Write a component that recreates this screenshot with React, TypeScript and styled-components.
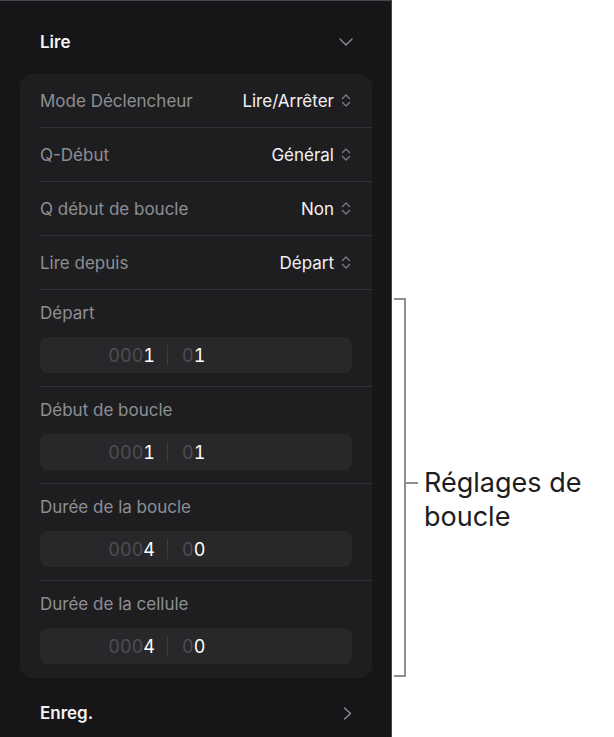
import styled, { createGlobalStyle } from 'styled-components';

const GlobalStyle = createGlobalStyle`
  html, body {
    margin: 0;
    padding: 0;
    background: #ffffff;
  }
  body {
    font-family: Inter, "Noto Sans", "Liberation Sans", sans-serif;
    -webkit-font-smoothing: antialiased;
  }
`;

type Choice = { label: string; value: string };
type Position = { label: string; major: string; minor: string };

const choices: Choice[] = [
  { label: 'Mode Déclencheur', value: 'Lire/Arrêter' },
  { label: 'Q-Début', value: 'Général' },
  { label: 'Q début de boucle', value: 'Non' },
  { label: 'Lire depuis', value: 'Départ' },
];

const positions: Position[] = [
  { label: 'Départ', major: '0001', minor: '01' },
  { label: 'Début de boucle', major: '0001', minor: '01' },
  { label: 'Durée de la boucle', major: '0004', minor: '00' },
  { label: 'Durée de la cellule', major: '0004', minor: '00' },
];

function ChevronDown() {
  return (
    <svg width="14" height="8" viewBox="0 0 14 8" fill="none">
      <path d="M1 1l6 6 6-6" stroke="#8d8d92" strokeWidth="1.4" strokeLinecap="round" strokeLinejoin="round" />
    </svg>
  );
}

function ChevronRight() {
  return (
    <svg width="9" height="13" viewBox="0 0 9 13" fill="none">
      <path d="M1.5 1l6 5.5-6 5.5" stroke="#8d8d92" strokeWidth="1.4" strokeLinecap="round" strokeLinejoin="round" />
    </svg>
  );
}

function UpDown() {
  return (
    <svg width="10" height="15" viewBox="0 0 10 15" fill="none">
      <path d="M1.5 5.5L5 2l3.5 3.5M1.5 9.5L5 13l3.5-3.5" stroke="#7c7c81" strokeWidth="1.3" strokeLinecap="round" strokeLinejoin="round" />
    </svg>
  );
}

// leading digits are shown dimmed, the last one bright
function Digits({ value }: { value: string }) {
  return (
    <>
      <Dim>{value.slice(0, -1)}</Dim>
      <Bright>{value.slice(-1)}</Bright>
    </>
  );
}

export default function App() {
  return (
    <>
      <GlobalStyle />
      <Page>
        <Panel>
          <SectionHeader>
            <HeaderTitle>Lire</HeaderTitle>
            <ChevronDown />
          </SectionHeader>
          <Card>
            {choices.map((c) => (
              <ChoiceRow key={c.label}>
                <RowLabel>{c.label}</RowLabel>
                <RowValue>
                  {c.value}
                  <UpDown />
                </RowValue>
              </ChoiceRow>
            ))}
            {positions.map((p, i) => (
              <PositionBlock key={p.label} $last={i === positions.length - 1}>
                <RowLabel>{p.label}</RowLabel>
                <PositionField>
                  <MajorPart>
                    <Digits value={p.major} />
                  </MajorPart>
                  <FieldDivider />
                  <MinorPart>
                    <Digits value={p.minor} />
                  </MinorPart>
                </PositionField>
              </PositionBlock>
            ))}
          </Card>
          <FooterRow>
            <HeaderTitle>Enreg.</HeaderTitle>
            <ChevronRight />
          </FooterRow>
        </Panel>
        <Annotation>
          <Bracket />
          <Callout>
            <Tick />
            <CalloutText>
              Réglages de
              <br />
              boucle
            </CalloutText>
          </Callout>
        </Annotation>
      </Page>
    </>
  );
}

const Page = styled.div`
  display: flex;
  width: 614px;
  height: 737px;
  overflow: hidden;
  background: #ffffff;
`;

const Panel = styled.div`
  box-sizing: border-box;
  width: 392px;
  height: 737px;
  flex-shrink: 0;
  background: #161618;
  border-top: 1px solid #46464a;
  border-right: 1px solid #46464a;
  padding: 0 19px 0 20px;
  display: flex;
  flex-direction: column;
`;

const SectionHeader = styled.div`
  display: flex;
  align-items: center;
  justify-content: space-between;
  height: 73px;
  padding: 8px 19px 0 20px;
  box-sizing: border-box;
`;

const HeaderTitle = styled.div`
  color: #f4f4f5;
  font-size: 17px;
  font-weight: 600;
  line-height: 22px;
`;

const Card = styled.div`
  background: #1e1e21;
  border-radius: 12px;
  padding-left: 20px;
`;

const ChoiceRow = styled.div`
  display: flex;
  align-items: center;
  justify-content: space-between;
  height: 54px;
  box-sizing: border-box;
  padding-right: 21px;
  border-bottom: 1px solid #323236;
`;

const RowLabel = styled.div`
  color: #8e8e93;
  font-size: 17px;
  line-height: 22px;
`;

const RowValue = styled.div`
  display: flex;
  align-items: center;
  gap: 7px;
  color: #f2f2f3;
  font-size: 17px;
  line-height: 22px;
`;

const PositionBlock = styled.div<{ $last: boolean }>`
  display: flex;
  flex-direction: column;
  gap: 13px;
  padding: 12px 20px ${(p) => (p.$last ? '14px' : '13px')} 0;
  border-bottom: ${(p) => (p.$last ? 'none' : '1px solid #323236')};
`;

const PositionField = styled.div`
  display: flex;
  align-items: center;
  height: 36px;
  border-radius: 8px;
  background: #28282b;
  font-size: 18px;
  font-variant-numeric: tabular-nums;
`;

const MajorPart = styled.div`
  width: 115px;
  text-align: right;
`;

const MinorPart = styled.div`
  flex: 1;
`;

const FieldDivider = styled.div`
  width: 1px;
  height: 20px;
  margin: 0 14px 0 12px;
  background: #3c3c40;
`;

const Dim = styled.span`
  color: #4d4d52;
`;

const Bright = styled.span`
  color: #ffffff;
`;

const FooterRow = styled.div`
  display: flex;
  align-items: center;
  justify-content: space-between;
  padding: 24px 20px 0 20px;
`;

const Annotation = styled.div`
  display: flex;
  align-items: flex-start;
  padding: 298px 0 0 2px;
`;

const Bracket = styled.div`
  box-sizing: border-box;
  width: 12px;
  height: 379px;
  border: 2px solid #8f8f8f;
  border-left: none;
  flex-shrink: 0;
`;

const Callout = styled.div`
  display: flex;
  align-items: flex-start;
  margin-top: 168px;
`;

const Tick = styled.div`
  width: 12px;
  height: 2px;
  margin-top: 16px;
  background: #8f8f8f;
  flex-shrink: 0;
`;

const CalloutText = styled.div`
  margin-left: 6px;
  color: #1d1d1f;
  font-size: 27px;
  line-height: 34px;
  white-space: nowrap;
`;
